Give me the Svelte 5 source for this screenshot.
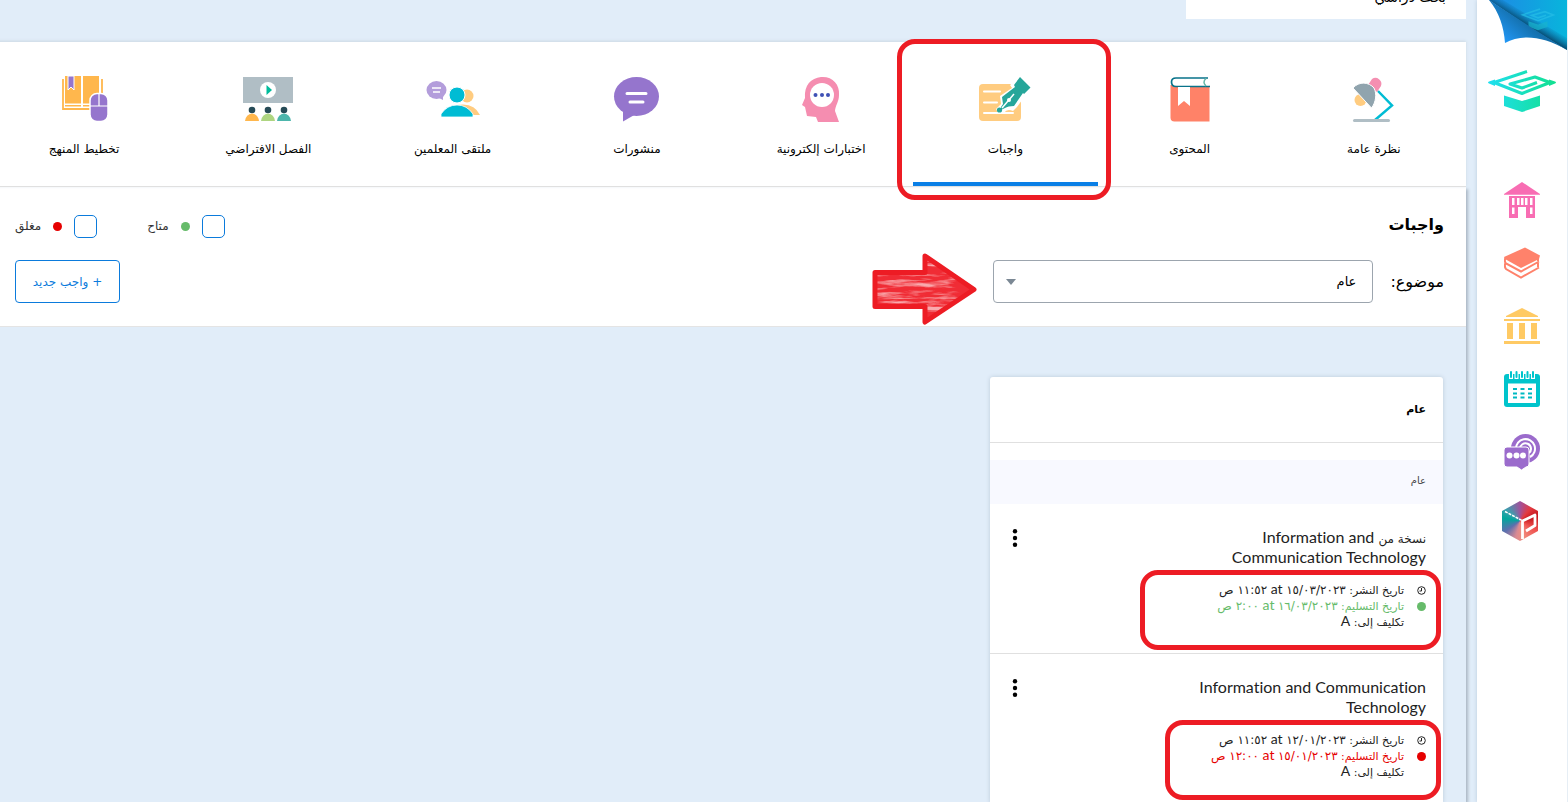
<script>
  const tabs = [
    { id: 'overview', label: 'نظرة عامة' },
    { id: 'content', label: 'المحتوى' },
    { id: 'homework', label: 'واجبات', active: true },
    { id: 'quizzes', label: 'اختبارات إلكترونية' },
    { id: 'posts', label: 'منشورات' },
    { id: 'teachers', label: 'ملتقى المعلمين' },
    { id: 'virtual', label: 'الفصل الافتراضي' },
    { id: 'plan', label: 'تخطيط المنهج' }
  ];

  const items = [
    {
      prefix: 'نسخة من',
      title: 'Information and Communication Technology',
      published: ['١٥/٠٣/٢٠٢٣', '١١:٥٢ ص'],
      due: ['١٦/٠٣/٢٠٢٣', '٢:٠٠ ص'],
      state: 'open'
    },
    {
      prefix: '',
      title: 'Information and Communication Technology',
      published: ['١٢/٠١/٢٠٢٣', '١١:٥٢ ص'],
      due: ['١٥/٠١/٢٠٢٣', '١٢:٠٠ ص'],
      state: 'closed'
    }
  ];
</script>

<div class="app" dir="rtl" lang="ar">
  <aside class="sidebar">
    <svg class="fold" width="78" height="50" viewBox="0 0 78 50" aria-hidden="true">
      <defs>
        <linearGradient id="foldTop" x1="0" y1="0" x2="1" y2="0">
          <stop offset="0" stop-color="#1e88e5" /><stop offset="1" stop-color="#08b5dc" />
        </linearGradient>
        <linearGradient id="foldUnder" gradientUnits="userSpaceOnUse" x1="18" y1="42" x2="42" y2="14">
          <stop offset="0" stop-color="#2196f3" /><stop offset="0.65" stop-color="#1574b4" /><stop offset="1" stop-color="#12659a" />
        </linearGradient>
        <linearGradient id="foldShade" gradientUnits="userSpaceOnUse" x1="40" y1="27" x2="46" y2="17">
          <stop offset="0" stop-color="#074a70" /><stop offset="1" stop-color="#0a6fa5" stop-opacity="0" />
        </linearGradient>
      </defs>
      <path d="M0 0H78V50L40 27Z" fill="url(#foldTop)" />
      <path d="M0 0H14L78 38V50L40 27Z" fill="url(#foldShade)" />
      <g transform="translate(31 8) scale(.53)" opacity=".75">
        <path d="M38 2L5 13L34 24L63 13L47 7L22 14L34 18.500L49 13.500" fill="none" stroke="#24bde6" stroke-width="3" />
        <path d="M16 25L34 31L52 25V36Q43 39 34 42Q25 39 16 36Z" fill="#18b3cf" />
      </g>
      <path d="M0 0C10 12 15 27 16 43C32 34 54 36 78 50L40 26Z" fill="url(#foldUnder)" />
    </svg>
    <a class="brand" href="#home" aria-label="الرئيسية">
      <svg width="68" height="42" viewBox="0 0 68 42">
        <defs>
          <linearGradient id="brand" gradientUnits="userSpaceOnUse" x1="0" y1="0" x2="68" y2="0"><stop offset="0" stop-color="#20dff0" /><stop offset="1" stop-color="#12e08f" /></linearGradient>
        </defs>
        <path d="M39 1.500L6 12.500L34 23.500L62 12.500L47 7L22 14L34 18L49 12.500" fill="none" stroke="url(#brand)" stroke-width="3" stroke-linejoin="round" />
        <path d="M34 0L1 11.500Q-1 12.500 1 13.500L10 17V8.500ZM58 8.500V17L67 13.500Q69 12.500 67 11.500Z" fill="none" />
        <path d="M7 9.500L1 11.500Q-1 12.500 1 13.500L7 16ZM61 9.500L67 11.500Q69 12.500 67 13.500L61 16Z" fill="url(#brand)" />
        <path d="M16 25.500L34 31L52 25.500V36Q43 39 34 42Q25 39 16 36Z" fill="url(#brand)" />
      </svg>
    </a>
    <nav class="side-links" aria-label="القائمة">
      <a href="#school" aria-label="المدرسة">
        <svg width="36" height="36" viewBox="0 0 36 36" fill="#f86db3">
          <path d="M18 0L36 12V12.700H0V12Z" />
          <path fill-rule="evenodd" d="M5 14H31V36H22V25H14V36H5ZM8 16V23H10.500V16ZM13 16V23H15.500V16ZM17 16V23H19.500V16ZM21 16V23H23.500V16ZM26 16V23H28.500V16ZM8 25.500V32H10.500V25.500ZM26 25.500V32H28.500V25.500Z" />
        </svg>
      </a>
      <a href="#courses" aria-label="المقررات">
        <svg width="36" height="32" viewBox="0 0 36 32">
          <path d="M21 0.500L36 8.500L35 12L17 21L1 12L0 10Z" fill="#ff826b" />
          <g fill="none" stroke="#ff826b" stroke-width="2">
            <path d="M1.500 11Q0 14 2 16.500L17 24.500L35 14.500M34 10V14" />
            <path d="M1.500 16Q0 19.500 2 22L17 30.500L35 20.500M34 16V20" />
          </g>
        </svg>
      </a>
      <a href="#library" aria-label="المكتبة">
        <svg width="36" height="36" viewBox="0 0 36 36" fill="#ffca64">
          <path d="M18 0L34 8V9H2V8Z" /><path d="M0 11H36V13H0ZM3 15H9V31H3ZM15 15H21V31H15ZM27 15H33V31H27ZM0 33H36V36H0Z" />
        </svg>
      </a>
      <a href="#calendar" aria-label="التقويم">
        <svg width="36" height="36" viewBox="0 0 36 36">
          <rect y="3" width="36" height="33" rx="3" fill="#00c4cc" />
          <rect x="4" y="12.500" width="28" height="19.500" fill="#fff" />
          <path d="M7 0V8M12.500 0V8M18 0V8M23.500 0V8M29 0V8" stroke="#fff" stroke-width="4" />
          <path d="M7 1V6M12.500 1V6M18 1V6M23.500 1V6M29 1V6" stroke="#00c4cc" stroke-width="2" stroke-linecap="round" />
          <path d="M9 18H28M9 22.500H28M9 26.500H28" stroke="#00b9c2" stroke-width="2" stroke-dasharray="4 3.500" />
        </svg>
      </a>
      <a href="#messages" aria-label="الرسائل">
        <svg width="36" height="36" viewBox="0 0 36 36">
          <circle cx="21.500" cy="14.500" r="14.500" fill="#9b6bcc" />
          <path d="M12 15A9.500 9.500 0 1 1 26 23M16 15A5.500 5.500 0 1 1 25 19" fill="none" stroke="#fff" stroke-width="2" />
          <path d="M3 13H22Q25 13 25 16V30Q25 33 22 33L17.500 36L13 33H3Q0 33 0 30V16Q0 13 3 13Z" fill="#9b6bcc" stroke="#fff" stroke-width="1" />
          <g fill="#fff"><circle cx="5.500" cy="21.500" r="3" /><circle cx="12.500" cy="21.500" r="3" /><circle cx="19" cy="21.500" r="3" /></g>
        </svg>
      </a>
      <a class="cube" href="#portal" aria-label="البوابة">
        <span class="cube-face"></span>
        <svg width="36" height="40" viewBox="0 0 36 40" fill="none" stroke="#fff">
          <path d="M3 10.500L20 19.500" stroke-width="1.500" stroke-dasharray="3 1" />
          <path d="M20.500 38V20L33 14V24.500L24 30" stroke-width="2.800" stroke-linejoin="round" />
        </svg>
      </a>
    </nav>
  </aside>

  <main>
    <section class="crumb"><span>بحث دراسي</span></section>

    <nav class="tabs" aria-label="أقسام المقرر">
      {#each tabs as tab}
        <a class="tab" class:active={tab.active} href={'#' + tab.id}>
          <svg width="56" height="48" viewBox="0 0 56 48" aria-hidden="true">
            {#if tab.id === 'overview'}
              <path d="M32 15L46 29.500L29 44" fill="none" stroke="#00bcd4" stroke-width="2.500" />
              <path d="M22 9L26 3A6 6 0 0 1 35 10L31 16Z" fill="#f48fb1" />
              <circle cx="14.500" cy="24" r="6" fill="#ffcc80" />
              <path d="M7 12C13 5 23 6 28 12C31 18 30 26 25.500 32Z" fill="#90a4ae" stroke="#fff" />
              <rect x="7" y="43" width="37" height="3" rx="1.500" fill="#b0bec5" />
            {:else if tab.id === 'content'}
              <path d="M8.500 9H47.500V45.500H12.500Q8.500 45.500 8.500 41.500Z" fill="#ff8268" />
              <path d="M46 2H14Q9.500 2 9.500 6Q9.500 10.500 14 10.500H48" fill="#fff" stroke="#08738a" stroke-width="1.700" />
              <path d="M44 2.500Q40 6 44 10" fill="none" stroke="#65b7a8" stroke-width="1.500" />
              <path d="M16 11H28V30L22 25L16 30Z" fill="#fff" />
            {:else if tab.id === 'homework'}
              <rect x="2" y="8" width="42" height="37" rx="4" fill="#ffcc80" />
              <path d="M7 15.500H23M7 26.500H20M7 37H36" stroke="#fff" stroke-width="2" stroke-linecap="round" />
              <path d="M43 1L33 9L35 12L23 20L24 28L19 33L21 37H27Q30 32 36 35L40 31L48 20Z" fill="#fff" />
              <path d="M43 1L53.500 11.500L47 18L46 17L37 30Q31 30 28 32L24 34L24 31L26 28L25 21L38 11L37 9Z" fill="#26a69a" />
              <circle cx="22.500" cy="34" r="2.600" fill="#26a69a" />
              <path d="M25 32L37 18" stroke="#fff" stroke-width="1.500" /><circle cx="32" cy="24" r="2" fill="#fff" />
            {:else if tab.id === 'quizzes'}
              <path d="M28 1C39 0 47 8 46 19C46 26 42 30 42 35L46 46H25L23 41L14 40L12 31L9 29L12 22C11 9 18 2 28 1Z" fill="#f58db0" />
              <circle cx="29" cy="19" r="12" fill="#fff" />
              <g fill="#3f51b5"><circle cx="22.500" cy="19" r="2" /><circle cx="29" cy="19" r="2" /><circle cx="35" cy="19" r="2" /></g>
            {:else if tab.id === 'posts'}
              <ellipse cx="27.500" cy="20.500" rx="22.500" ry="19.500" fill="#9575cd" />
              <path d="M14 34V45.500L27 38Z" fill="#9575cd" />
              <path d="M18 17.500H37M21 26H34" stroke="#fff" stroke-width="3" stroke-linecap="round" />
            {:else if tab.id === 'teachers'}
              <circle cx="42" cy="20" r="6.500" fill="#ffcc80" /><path d="M32 29Q49 26 55 39H43Z" fill="#ffcc80" />
              <circle cx="32" cy="19" r="8" fill="#00bcd4" stroke="#fff" />
              <path d="M16 41V38Q22 29 32 29Q42 29 48 38V41Z" fill="#00bcd4" stroke="#fff" stroke-width=".8" />
              <ellipse cx="11.500" cy="14" rx="10" ry="9" fill="#b39ddb" /><path d="M12 21L18 24V19Z" fill="#b39ddb" />
              <path d="M7 12H16M8 16H15" stroke="#fff" stroke-width="1.500" />
            {:else if tab.id === 'virtual'}
              <rect x="3" y="1" width="50" height="26" fill="#b0bec5" />
              <circle cx="28" cy="14" r="8" fill="#fff" /><path d="M26.500 9L32 14L26.500 19Z" fill="#00bc9c" />
              <g fill="#264b57"><circle cx="12" cy="34" r="3.300" /><circle cx="28" cy="34" r="3.300" /><circle cx="44" cy="34" r="3.300" /></g>
              <path d="M5 45Q6 38 12 37.500Q18 38 19 45Z" fill="#ffb74d" /><path d="M21 45Q22 38 28 37.500Q34 38 35 45Z" fill="#aed581" /><path d="M37 45Q38 38 44 37.500Q50 38 51 45Z" fill="#4db6ac" />
            {:else}
              <path d="M7 3V33H46V3" fill="none" stroke="#ffb74d" stroke-width="1.800" />
              <path d="M9 0H25V27.500H9ZM27 0H43V27.500H27ZM9 29H25V30.500H9ZM27 29H43V30.500H27Z" fill="#ffb74d" />
              <path d="M12 0H18V14L15 11L12 14Z" fill="#9575cd" stroke="#fff" />
              <rect x="34" y="17.500" width="18" height="28" rx="7" fill="#9575cd" stroke="#fff" stroke-width="1.500" />
              <path d="M34 30H52M43 18V30" stroke="#fff" stroke-width="1.200" />
            {/if}
          </svg>
          <span>{tab.label}</span>
          {#if tab.active}<i class="mark tab-mark"></i>{/if}
        </a>
      {/each}
    </nav>

    <div class="body">
      <section class="filters">
        <div class="row">
          <h1>واجبات</h1>
          <div class="checks">
            <label><input type="checkbox" /><i class="dot open"></i><span>متاح</span></label>
            <label><input type="checkbox" /><i class="dot closed"></i><span>مغلق</span></label>
          </div>
        </div>
        <div class="row second">
          <div class="topic">
            <label for="topic">موضوع:</label>
            <div class="select">
              <select id="topic"><option>عام</option></select>
              <svg class="arrow" width="106" height="74" viewBox="0 0 106 74" aria-hidden="true">
                <defs>
                  <filter id="chalk" x="0" y="0" width="1" height="1">
                    <feTurbulence type="fractalNoise" baseFrequency="0.025 0.2" numOctaves="4" seed="8" />
                    <feColorMatrix values="0 0 0 0 1  0 0 0 0 1  0 0 0 0 1  4 0 0 0 -1.800" />
                    <feComposite in2="SourceGraphic" operator="in" />
                  </filter>
                </defs>
                <path d="M3 20.500H53V4L102 37.500L53 70V54.500H3Z" fill="#f02c35" />
                <path d="M3 20.500H53V4L102 37.500L53 70V54.500H3Z" fill="#fff" filter="url(#chalk)" opacity=".6" />
                <path d="M3 20.500H53V4L102 37.500L53 70V54.500H3Z" fill="none" stroke="#ed1c24" stroke-width="5" stroke-linejoin="round" />
              </svg>
            </div>
          </div>
          <button class="new" type="button">+ واجب جديد</button>
        </div>
      </section>

      <section class="list">
        <h2>عام</h2>
        <h3>عام</h3>
        {#each items as item}
          <article>
            <div class="info">
              <p class="title">{#if item.prefix}<span class="ar">{item.prefix}</span>{' '}{/if}<bdi dir="ltr">{item.title}</bdi></p>
              <div class="meta">
                <p>
                  <svg width="9" height="9" viewBox="0 0 9 9" fill="none" stroke="#222" aria-hidden="true"><circle cx="4.500" cy="4.500" r="3.800" /><path d="M4.500 2V5H2.500" /></svg>
                  <span>تاريخ النشر: <time>{item.published[0]}</time> <b>at</b> <time>{item.published[1]}</time></span>
                </p>
                <p class={item.state}>
                  <i class="dot {item.state}"></i>
                  <span>تاريخ التسليم: <time>{item.due[0]}</time> <b>at</b> <time>{item.due[1]}</time></span>
                </p>
                <p><i class="blank"></i><span>تكليف إلى: <b>A</b></span></p>
                <i class="mark meta-mark {item.state}"></i>
              </div>
            </div>
            <button class="more" type="button" aria-label="المزيد">
              <svg width="6" height="18" viewBox="0 0 6 18"><circle cx="3" cy="2.200" r="2.200" /><circle cx="3" cy="9" r="2.200" /><circle cx="3" cy="15.800" r="2.200" /></svg>
            </button>
          </article>
        {/each}
      </section>
    </div>
  </main>
</div>

<style>
  :global(body) { background: #e1edf9; overflow: hidden; }
  * { box-sizing: border-box; }
  h1, h2, h3, p { margin: 0; }
  .app {
    display: flex;
    height: 100vh;
    overflow: hidden;
    color: #000;
    background: #e1edf9;
    font-family: "DejaVu Sans", sans-serif;
    font-size: 12px;
  }
  .sidebar {
    position: relative;
    flex: none;
    width: 91px;
    padding-top: 70px;
    background: #fff;
    border-right: 1px solid #e6eef5;
    box-shadow: 0 0 4px #b9cbdc;
    display: flex;
    flex-direction: column;
    align-items: center;
  }
  .fold { position: absolute; top: 0; right: 0; }
  .brand { height: 42px; }
  .side-links { display: flex; flex-direction: column; align-items: center; gap: 27px; margin-top: 70px; }
  .side-links a { display: flex; align-items: center; height: 36px; }
  .side-links .cube { position: relative; height: 40px; margin: 4px 4px 0 0; }
  .cube-face {
    width: 36px;
    height: 40px;
    clip-path: polygon(50% 0, 100% 25%, 100% 75%, 50% 100%, 0 75%, 0 25%);
    background: conic-gradient(from 0deg, #a0529c, #e33a40 40deg, #c4161c 75deg, #ef5350 120deg, #f09080 170deg, #d88a94 195deg, #5d6fae 235deg, #00a69c 280deg, #3b9fae 310deg, #a0529c);
  }
  .cube svg { position: absolute; inset: 0; }

  main { flex: 1; min-width: 0; padding-right: 11px; display: flex; flex-direction: column; }
  .crumb {
    flex: none;
    width: 280px;
    height: 19px;
    overflow: hidden;
    padding-right: 20px;
    background: #fff;
    display: flex;
    align-items: flex-end;
    font-size: 14px;
  }
  .crumb span { line-height: 44px; }
  .tabs {
    flex: none;
    display: flex;
    height: 145px;
    margin: 23px 0 0 -8px;
    background: #fff;
    border-bottom: 1px solid #e0e0e0;
    z-index: 1;
    box-shadow: 0 -1px 3px #ccd8e3;
  }
  .tab {
    position: relative;
    flex: 1;
    min-width: 0;
    padding-top: 34px;
    display: flex;
    flex-direction: column;
    align-items: center;
    gap: 15px;
    color: #000;
    text-decoration: none;
    white-space: nowrap;
  }
  .tab span { line-height: 20px; }
  .tab.active { border-bottom: 4px solid #0a7fe6; }
  .mark { position: absolute; z-index: 2; border: 5px solid #ed1c24; border-radius: 18px; pointer-events: none; }
  .tab-mark { inset: -3px -13px -18px -16px; }

  .body { position: relative; flex: 1; min-height: 0; box-shadow: 2px 2px 3px #aab7c4; }
  .filters { background: #fff; border-bottom: 1px solid #e4e4e4; padding: 20px 22px 23px 15px; }
  .row { display: flex; justify-content: space-between; align-items: center; height: 34px; }
  .second { height: 43px; margin-top: 19px; }
  h1 { font-size: 16px; }
  .checks { display: flex; gap: 50px; padding-top: 4px; color: #333; }
  .checks label { display: flex; align-items: center; gap: 12px; }
  .checks input {
    appearance: none;
    width: 23px;
    height: 23px;
    margin: 0;
    border: 1px solid #0b7bdc;
    border-radius: 5px;
    background: #fff;
  }
  .dot { flex: none; width: 9px; height: 9px; border-radius: 50%; }
  .dot.open { background: #66bb6a; }
  .dot.closed { background: #e60000; }
  .topic { display: flex; align-items: center; gap: 17px; font-size: 16px; }
  .select { position: relative; }
  select {
    appearance: none;
    width: 380px;
    height: 43px;
    padding: 0 16px;
    border: 1px solid #9ca5ae;
    border-radius: 4px;
    background: #fff;
    color: #000;
    font: 13px "DejaVu Sans", sans-serif;
  }
  .select::after {
    content: "";
    position: absolute;
    left: 13px;
    top: 19px;
    border: 5px solid transparent;
    border-top: 6px solid #7b8894;
    border-bottom: 0;
  }
  .arrow { position: absolute; left: -121px; top: -8px; }
  .new {
    width: 105px;
    height: 43px;
    padding: 0;
    border: 1px solid #0b7bdc;
    border-radius: 4px;
    background: #fff;
    color: #0b7bdc;
    font: 12px "DejaVu Sans", sans-serif;
  }

  .list {
    width: 453px;
    margin: 50px 23px 0 0;
    background: #fff;
    border-radius: 3px;
    box-shadow: 0 0 4px #bccbd9;
  }
  h2 { height: 66px; padding: 0 17px; border-bottom: 1px solid #e0e0e0; font-size: 11px; line-height: 66px; }
  h3 { height: 44px; margin-top: 17px; padding: 0 17px; background: #f8f9ff; color: #444; font-size: 10px; font-weight: 400; line-height: 42px; }
  article { display: flex; justify-content: space-between; align-items: flex-start; height: 150px; padding: 23px 17px 0 22px; border-bottom: 1px solid #e0e0e0; }
  .info { width: 250px; }
  .title { color: #222; font: 16px/20px Lato, sans-serif; }
  .title bdi { font-variant-ligatures: none; }
  .title .ar { font: 12px/12px "DejaVu Sans", sans-serif; }
  .meta { position: relative; margin-top: 15px; color: #222; font-size: 11px; }
  .meta p { display: flex; align-items: center; gap: 13px; height: 16px; line-height: 16px; white-space: nowrap; }
  .meta p.open { color: #66bb6a; }
  .meta p.closed { color: #e60000; }
  .meta b { font: 14px/16px Lato, sans-serif; }
  .meta time { font-size: 12px; }
  .meta svg, .blank { flex: none; width: 9px; }
  .meta-mark { inset: -12px -15px auto auto; height: 80px; }
  .mark.open { width: 301px; }
  .mark.closed { width: 276px; }
  .more { display: flex; justify-content: center; width: 6px; padding: 2px 0; border: 0; background: none; }
  .more svg { flex: none; }
</style>
